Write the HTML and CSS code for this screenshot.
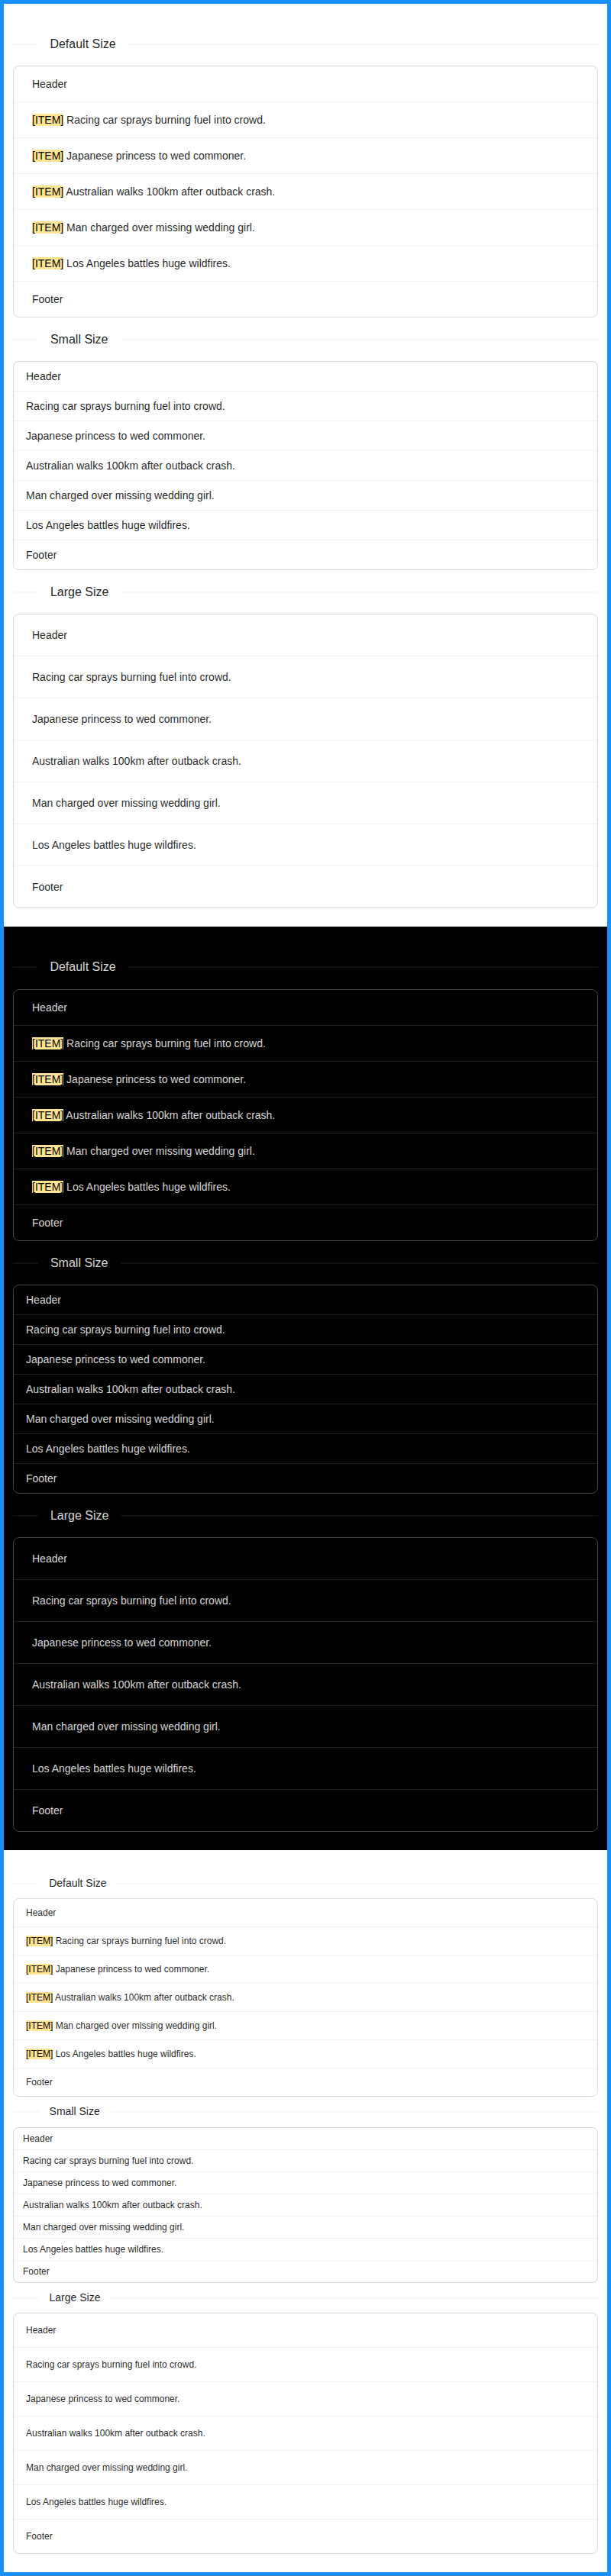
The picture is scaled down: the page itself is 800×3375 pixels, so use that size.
FILE: index.html
```html
<!DOCTYPE html>
<html lang="en">
<head>
<meta charset="utf-8">
<title>List sizes</title>
<link rel="stylesheet" href="styles.css">
</head>
<body>
<div class="frame">
  <section class="theme light">
    <div class="divider"><span class="divider-text">Default Size</span></div>
    <div class="list size-default">
      <div class="list-row list-header">Header</div>
      <div class="list-row"><mark class="tag">[ITEM]</mark> Racing car sprays burning fuel into crowd.</div>
      <div class="list-row"><mark class="tag">[ITEM]</mark> Japanese princess to wed commoner.</div>
      <div class="list-row"><mark class="tag">[ITEM]</mark> Australian walks 100km after outback crash.</div>
      <div class="list-row"><mark class="tag">[ITEM]</mark> Man charged over missing wedding girl.</div>
      <div class="list-row"><mark class="tag">[ITEM]</mark> Los Angeles battles huge wildfires.</div>
      <div class="list-row list-footer">Footer</div>
    </div>
    <div class="divider"><span class="divider-text">Small Size</span></div>
    <div class="list size-small">
      <div class="list-row list-header">Header</div>
      <div class="list-row">Racing car sprays burning fuel into crowd.</div>
      <div class="list-row">Japanese princess to wed commoner.</div>
      <div class="list-row">Australian walks 100km after outback crash.</div>
      <div class="list-row">Man charged over missing wedding girl.</div>
      <div class="list-row">Los Angeles battles huge wildfires.</div>
      <div class="list-row list-footer">Footer</div>
    </div>
    <div class="divider"><span class="divider-text">Large Size</span></div>
    <div class="list size-large">
      <div class="list-row list-header">Header</div>
      <div class="list-row">Racing car sprays burning fuel into crowd.</div>
      <div class="list-row">Japanese princess to wed commoner.</div>
      <div class="list-row">Australian walks 100km after outback crash.</div>
      <div class="list-row">Man charged over missing wedding girl.</div>
      <div class="list-row">Los Angeles battles huge wildfires.</div>
      <div class="list-row list-footer">Footer</div>
    </div>
  </section>

  <section class="theme dark">
    <div class="divider"><span class="divider-text">Default Size</span></div>
    <div class="list size-default">
      <div class="list-row list-header">Header</div>
      <div class="list-row"><mark class="tag">[ITEM]</mark> Racing car sprays burning fuel into crowd.</div>
      <div class="list-row"><mark class="tag">[ITEM]</mark> Japanese princess to wed commoner.</div>
      <div class="list-row"><mark class="tag">[ITEM]</mark> Australian walks 100km after outback crash.</div>
      <div class="list-row"><mark class="tag">[ITEM]</mark> Man charged over missing wedding girl.</div>
      <div class="list-row"><mark class="tag">[ITEM]</mark> Los Angeles battles huge wildfires.</div>
      <div class="list-row list-footer">Footer</div>
    </div>
    <div class="divider"><span class="divider-text">Small Size</span></div>
    <div class="list size-small">
      <div class="list-row list-header">Header</div>
      <div class="list-row">Racing car sprays burning fuel into crowd.</div>
      <div class="list-row">Japanese princess to wed commoner.</div>
      <div class="list-row">Australian walks 100km after outback crash.</div>
      <div class="list-row">Man charged over missing wedding girl.</div>
      <div class="list-row">Los Angeles battles huge wildfires.</div>
      <div class="list-row list-footer">Footer</div>
    </div>
    <div class="divider"><span class="divider-text">Large Size</span></div>
    <div class="list size-large">
      <div class="list-row list-header">Header</div>
      <div class="list-row">Racing car sprays burning fuel into crowd.</div>
      <div class="list-row">Japanese princess to wed commoner.</div>
      <div class="list-row">Australian walks 100km after outback crash.</div>
      <div class="list-row">Man charged over missing wedding girl.</div>
      <div class="list-row">Los Angeles battles huge wildfires.</div>
      <div class="list-row list-footer">Footer</div>
    </div>
  </section>

  <section class="theme light compact">
    <div class="divider"><span class="divider-text">Default Size</span></div>
    <div class="list size-default">
      <div class="list-row list-header">Header</div>
      <div class="list-row"><mark class="tag">[ITEM]</mark> Racing car sprays burning fuel into crowd.</div>
      <div class="list-row"><mark class="tag">[ITEM]</mark> Japanese princess to wed commoner.</div>
      <div class="list-row"><mark class="tag">[ITEM]</mark> Australian walks 100km after outback crash.</div>
      <div class="list-row"><mark class="tag">[ITEM]</mark> Man charged over missing wedding girl.</div>
      <div class="list-row"><mark class="tag">[ITEM]</mark> Los Angeles battles huge wildfires.</div>
      <div class="list-row list-footer">Footer</div>
    </div>
    <div class="divider"><span class="divider-text">Small Size</span></div>
    <div class="list size-small">
      <div class="list-row list-header">Header</div>
      <div class="list-row">Racing car sprays burning fuel into crowd.</div>
      <div class="list-row">Japanese princess to wed commoner.</div>
      <div class="list-row">Australian walks 100km after outback crash.</div>
      <div class="list-row">Man charged over missing wedding girl.</div>
      <div class="list-row">Los Angeles battles huge wildfires.</div>
      <div class="list-row list-footer">Footer</div>
    </div>
    <div class="divider"><span class="divider-text">Large Size</span></div>
    <div class="list size-large">
      <div class="list-row list-header">Header</div>
      <div class="list-row">Racing car sprays burning fuel into crowd.</div>
      <div class="list-row">Japanese princess to wed commoner.</div>
      <div class="list-row">Australian walks 100km after outback crash.</div>
      <div class="list-row">Man charged over missing wedding girl.</div>
      <div class="list-row">Los Angeles battles huge wildfires.</div>
      <div class="list-row list-footer">Footer</div>
    </div>
  </section>
</div>
</body>
</html>
```

FILE: styles.css
```css
* {
  box-sizing: border-box;
}

html,
body {
  margin: 0;
  padding: 0;
}

body {
  font-family: "Liberation Sans", Arial, Helvetica, sans-serif;
  background: #ffffff;
}

.frame {
  border: 5px solid #1890ff;
}

.theme {
  --text: rgba(0, 0, 0, 0.88);
  --line: rgba(5, 5, 5, 0.06);
  --border: #d9d9d9;
  padding: 24px 12px;
  font-size: 14px;
  line-height: 1.5714285714;
  color: var(--text);
  background: #ffffff;
}

.theme.dark {
  --text: rgba(255, 255, 255, 0.85);
  --line: rgba(253, 253, 253, 0.12);
  --border: #424242;
  background: #000000;
}

/* Divider with left-oriented title */
.divider {
  display: flex;
  align-items: center;
  margin: 16px 0;
  font-size: 16px;
  font-weight: 500;
  white-space: nowrap;
  color: var(--text);
}

.divider::before,
.divider::after {
  content: "";
  position: relative;
  border-top: 1px solid var(--line);
  transform: translateY(50%);
}

.divider::before {
  width: 5%;
}

.divider::after {
  width: 95%;
}

.divider-text {
  flex: none;
  display: inline-block;
  padding: 0 1em;
}

/* List */
.list {
  border: 1px solid var(--border);
  border-radius: 8px;
}

.list-row {
  padding: 12px 24px;
  border-bottom: 1px solid var(--line);
}

.list-row.list-footer {
  border-bottom: none;
}

.size-small .list-row {
  padding: 8px 16px;
}

.size-large .list-row {
  padding: 16px 24px;
}

.tag {
  padding: 0;
  background-color: #ffe58f;
  color: #000000;
}

/* Compact theme */
.compact {
  font-size: 12px;
  line-height: 1.6666666667;
}

.compact .divider {
  margin: 8px 0;
  font-size: 14px;
}

.compact .size-default .list-row {
  padding: 8px 16px;
}

.compact .size-small .list-row {
  padding: 4px 12px;
}

.compact .size-large .list-row {
  padding: 12px 16px;
}
```
